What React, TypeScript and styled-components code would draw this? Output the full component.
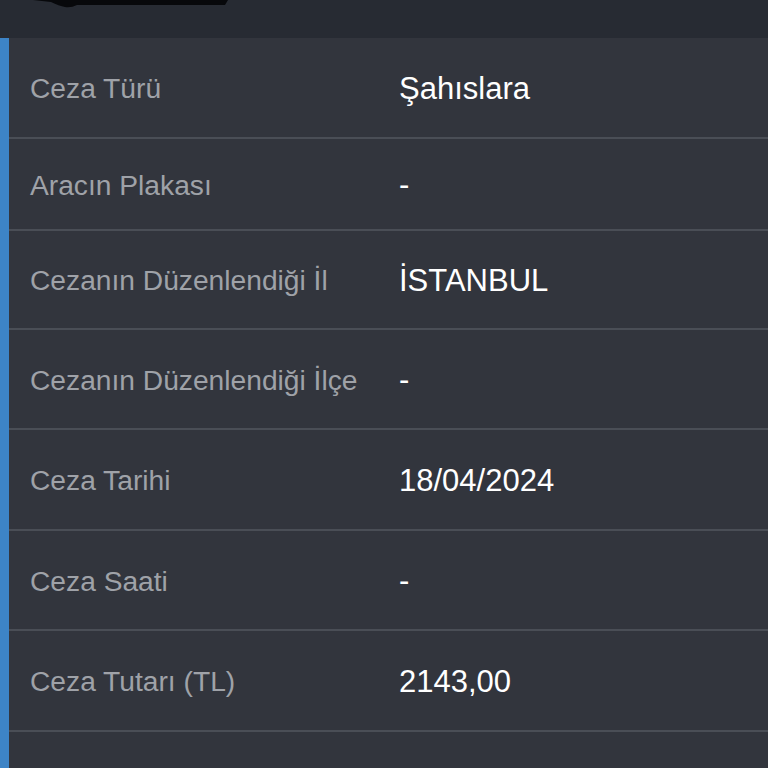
import React from 'react';
import styled, { createGlobalStyle } from 'styled-components';

// --- Estilos globais ---
const GlobalStyle = createGlobalStyle`
  html, body {
    margin: 0;
    padding: 0;
    background: #32353d;
    font-family: "Liberation Sans", Arial, Helvetica, sans-serif;
    -webkit-font-smoothing: antialiased;
  }
`;

// --- Dados ---
type Row = { label: string; value: string; height: number };

const rows: Row[] = [
  { label: 'Ceza Türü', value: 'Şahıslara', height: 99 },
  { label: 'Aracın Plakası', value: '-', height: 90 },
  { label: 'Cezanın Düzenlendiği İl', value: 'İSTANBUL', height: 97 },
  { label: 'Cezanın Düzenlendiği İlçe', value: '-', height: 98 },
  { label: 'Ceza Tarihi', value: '18/04/2024', height: 99 },
  { label: 'Ceza Saati', value: '-', height: 98 },
  { label: 'Ceza Tutarı (TL)', value: '2143,00', height: 99 },
];

// --- Componentes estilizados ---
const Page = styled.div`
  width: 768px;
  height: 768px;
  overflow: hidden;
  display: flex;
  flex-direction: column;
`;

const TopBar = styled.div`
  height: 38px;
  flex-shrink: 0;
  background: #272b33;
  display: flex;
  align-items: flex-start;
  padding-left: 33px;
`;

const Panel = styled.div`
  flex: 1;
  background: #32353d;
  border-left: 9px solid #3d84c6;
  display: flex;
  flex-direction: column;
`;

const DetailRow = styled.div<{ $h: number }>`
  height: ${(p) => p.$h}px;
  flex-shrink: 0;
  display: grid;
  grid-template-columns: 369px 1fr;
  align-items: center;
  padding-left: 21px;
  padding-top: 2px;
  box-sizing: content-box;
  border-bottom: 2px solid #4a4e56;
`;

const Label = styled.span`
  font-size: 28.2px;
  color: #9fa2a8;
  white-space: nowrap;
`;

const Value = styled.span`
  font-size: 31px;
  color: #ffffff;
  white-space: nowrap;
`;

const Cut = () => (
  <svg width="195" height="8" viewBox="0 0 195 8">
    <path d="M0 0 H195 L192 5 H44 Q38 8 32 7 Q26 6 18 2 Z" fill="#07080b" />
  </svg>
);

const App = () => (
  <>
    <GlobalStyle />
    <Page>
      <TopBar>
        <Cut />
      </TopBar>
      <Panel>
        {rows.map((r) => (
          <DetailRow key={r.label} $h={r.height - 2}>
            <Label>{r.label}</Label>
            <Value>{r.value}</Value>
          </DetailRow>
        ))}
      </Panel>
    </Page>
  </>
);

export default App;
